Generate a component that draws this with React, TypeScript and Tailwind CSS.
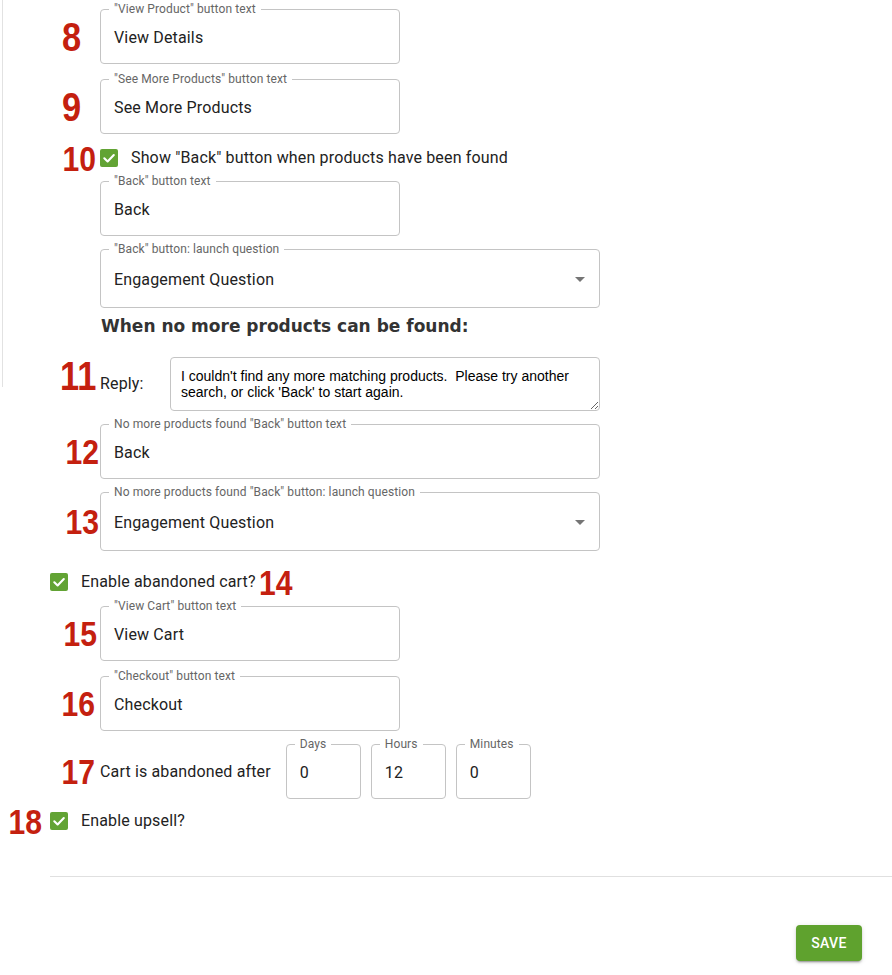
import React from "react";

const NUM = "shrink-0 text-right font-bold leading-none text-[#c4200f] [font-family:'Liberation_Sans',Arial,sans-serif]";
const SQ = "inline-block origin-right scale-x-[0.86]";

function Field({
  label,
  value,
  className,
  select,
}: {
  label: string;
  value: string;
  className: string;
  select?: boolean;
}) {
  return (
    <div className={`relative flex shrink-0 items-center rounded-[4px] border border-[#c4c4c4] pl-[13px] ${className}`}>
      <span className="absolute left-[8px] top-[-8px] whitespace-nowrap bg-white px-[5px] text-[12px] leading-[14px] tracking-[0.1px] text-[#666]">
        {label}
      </span>
      <span className="mt-[1px] text-[16px] leading-[23px] tracking-[0.15px] text-[#222]">{value}</span>
      {select && (
        <svg
          className="absolute right-[7px] top-1/2 -translate-y-1/2"
          width="24"
          height="24"
          viewBox="0 0 24 24"
        >
          <path d="M7 10l5 5 5-5z" fill="#757575" />
        </svg>
      )}
    </div>
  );
}

function Check() {
  return (
    <svg width="18" height="18" viewBox="0 0 18 18" className="shrink-0">
      <rect x="0" y="0" width="18" height="18" rx="2" fill="#62a334" />
      <polyline
        points="4.3,9.3 7.6,12.5 13.8,6"
        fill="none"
        stroke="#fff"
        strokeWidth="2.1"
        strokeLinecap="round"
        strokeLinejoin="round"
      />
    </svg>
  );
}

export default function App() {
  return (
    <div className="flex w-[892px] bg-white pb-[14px] text-[#222] [font-family:Roboto,'Liberation_Sans',Arial,sans-serif]">
      <div className="w-[3px] shrink-0">
        <div className="ml-[2px] h-[387px] w-px bg-[#e2e2e2]" />
      </div>
      <div className="flex w-[889px] flex-col">
        {/* 8 */}
        <div className="mt-[9px] flex h-[55px] items-center">
          <div className={`${NUM} w-[97px] pr-[19px] text-[40px]`}><span className={SQ}>8</span></div>
          <Field label={'"View Product" button text'} value="View Details" className="h-[55px] w-[300px]" />
        </div>
        {/* 9 */}
        <div className="mt-[15px] flex h-[55px] items-center">
          <div className={`${NUM} w-[97px] pr-[19px] text-[40px]`}><span className={SQ}>9</span></div>
          <Field label={'"See More Products" button text'} value="See More Products" className="h-[55px] w-[300px]" />
        </div>
        {/* 10 */}
        <div className="mt-[15px] flex h-[18px] items-center">
          <div className={`${NUM} w-[97px] pr-[4px] text-[35px]`}><span className={SQ}>10</span></div>
          <Check />
          <span className="ml-[13px] text-[16px] leading-[24px] tracking-[0.15px]">Show "Back" button when products have been found</span>
        </div>
        <div className="mt-[14px] flex h-[55px] items-center pl-[97px]">
          <Field label={'"Back" button text'} value="Back" className="h-[55px] w-[300px]" />
        </div>
        <div className="mt-[13px] flex h-[59px] items-center pl-[97px]">
          <Field label={'"Back" button: launch question'} value="Engagement Question" className="h-[59px] w-[500px]" select />
        </div>
        <div className="mt-[6px] h-[24px] pl-[98px] text-[17px] font-bold leading-[24px] text-[#333] [font-family:'DejaVu_Sans',sans-serif]">
          When no more products can be found:
        </div>
        {/* 11 */}
        <div className="mt-[19px] flex h-[54px] items-start">
          <div className={`${NUM} mt-[-1px] w-[97px] pr-[4px] text-[40px]`}><span className={SQ}>11</span></div>
          <div className="mt-[15px] w-[70px] shrink-0 text-[16px] leading-[24px] tracking-[0.15px]">Reply:</div>
          <textarea
            readOnly
            className="h-[54px] w-[430px] shrink-0 rounded-[4px] border border-[#c4c4c4] px-[10px] pt-[10px] text-[14px] leading-[16px] text-black [font-family:'Liberation_Sans',Arial,sans-serif]"
            defaultValue={"I couldn't find any more matching products.  Please try another search, or click 'Back' to start again."}
          />
        </div>
        {/* 12 */}
        <div className="mt-[13px] flex h-[55px] items-center">
          <div className={`${NUM} w-[97px] pr-[1px] text-[35px]`}><span className={SQ}>12</span></div>
          <Field label={'No more products found "Back" button text'} value="Back" className="h-[55px] w-[500px]" />
        </div>
        {/* 13 */}
        <div className="mt-[13px] flex h-[59px] items-center">
          <div className={`${NUM} w-[97px] pr-[1px] text-[35px]`}><span className={SQ}>13</span></div>
          <Field label={'No more products found "Back" button: launch question'} value="Engagement Question" className="h-[59px] w-[500px]" select />
        </div>
        {/* 14 */}
        <div className="mt-[22px] flex h-[18px] items-center pl-[47px]">
          <Check />
          <span className="ml-[13px] text-[16px] leading-[24px] tracking-[0.15px]">Enable abandoned cart?</span>
          <span className={`${NUM} ml-[3px] text-[35px]`}><span className="inline-block origin-left scale-x-[0.86]">14</span></span>
        </div>
        {/* 15 */}
        <div className="mt-[15px] flex h-[55px] items-center">
          <div className={`${NUM} w-[97px] pr-[3px] text-[35px]`}><span className={SQ}>15</span></div>
          <Field label={'"View Cart" button text'} value="View Cart" className="h-[55px] w-[300px]" />
        </div>
        {/* 16 */}
        <div className="mt-[15px] flex h-[55px] items-center">
          <div className={`${NUM} w-[97px] pr-[5px] text-[35px]`}><span className={SQ}>16</span></div>
          <Field label={'"Checkout" button text'} value="Checkout" className="h-[55px] w-[300px]" />
        </div>
        {/* 17 */}
        <div className="mt-[13px] flex h-[55px] items-center">
          <div className={`${NUM} w-[97px] pr-[5px] text-[35px]`}><span className={SQ}>17</span></div>
          <span className="text-[16px] leading-[24px] tracking-[0.15px]">Cart is abandoned after</span>
          <div className="ml-[15px] flex gap-[10px]">
            <Field label="Days" value="0" className="h-[55px] w-[75px]" />
            <Field label="Hours" value="12" className="h-[55px] w-[75px]" />
            <Field label="Minutes" value="0" className="h-[55px] w-[75px]" />
          </div>
        </div>
        {/* 18 */}
        <div className="mt-[13px] flex h-[18px] items-center">
          <div className={`${NUM} w-[47px] pr-[8px] text-[35px]`}><span className={SQ}>18</span></div>
          <Check />
          <span className="ml-[13px] text-[16px] leading-[24px] tracking-[0.15px]">Enable upsell?</span>
        </div>
        <div className="ml-[47px] mt-[46px] h-px bg-[#e0e0e0]" />
        <div className="mt-[48px] flex justify-end pr-[30px]">
          <button className="h-[36px] w-[66px] rounded-[4px] bg-[#5fa22e] text-[14px] font-medium tracking-[0.4px] text-white shadow-[0_3px_1px_-2px_rgba(0,0,0,0.2),0_2px_2px_0_rgba(0,0,0,0.14),0_1px_5px_0_rgba(0,0,0,0.12)]">
            SAVE
          </button>
        </div>
      </div>
    </div>
  );
}
